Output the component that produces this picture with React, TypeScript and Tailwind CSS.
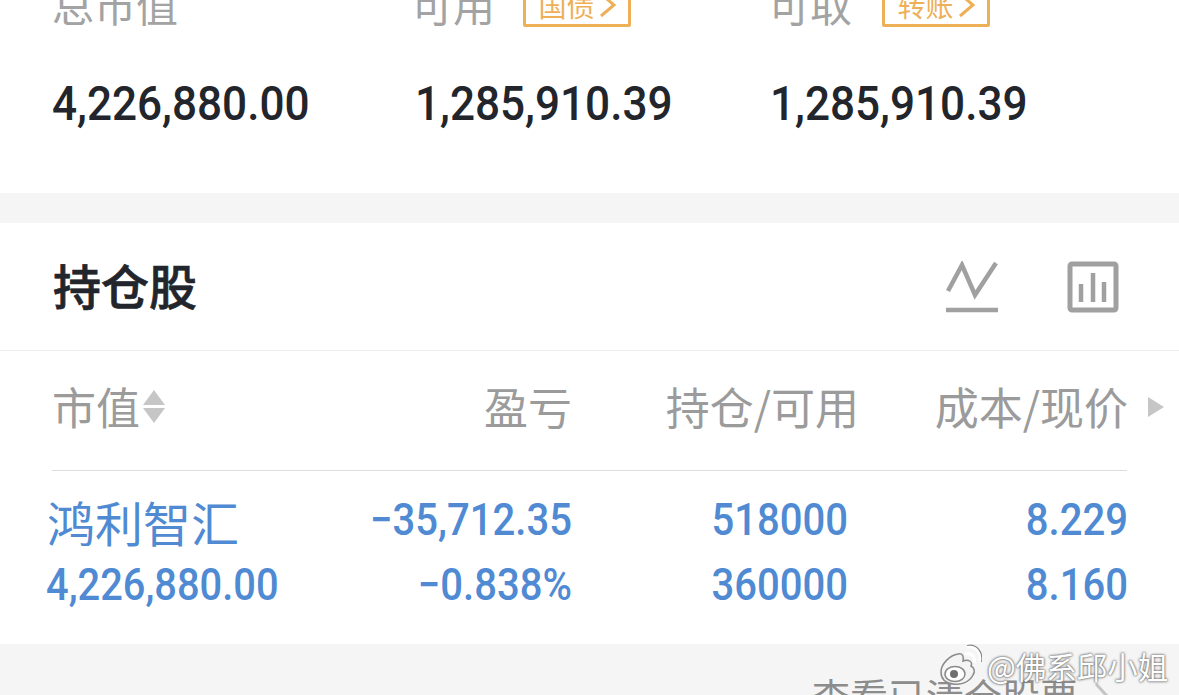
const cjk = "font-['Noto_Sans_CJK_SC',sans-serif]";
const num = "font-['Roboto','Noto_Sans_CJK_SC',sans-serif]";

function Tag({ label, gap }: { label: string; gap: string }) {
  return (
    <span className={`${gap} mt-[8px] flex h-[38px] w-[108px] shrink-0 items-center justify-center rounded-[2px] border-[3px] border-[#eeb057] pb-[6px] text-[28px] leading-none text-[#eeb057] ${cjk}`}>
      {label}
      <svg className="ml-[4px] h-[26px] w-[17px]" viewBox="0 0 17 26" fill="none" stroke="#eeb057" strokeWidth="3">
        <path d="M2 2 L15 13 L2 24" />
      </svg>
    </span>
  );
}

function Summary({ label, value, tag, gap = "", labelClass = "", className }: { label: string; value: string; tag?: string; gap?: string; labelClass?: string; className: string }) {
  return (
    <div className={className}>
      <div className="flex h-[38px] items-center">
        <span className={`${labelClass} text-[42px] leading-none text-[#a3a3a3] ${cjk}`}>{label}</span>
        {tag && <Tag label={tag} gap={gap} />}
      </div>
      <div className={`mt-[56px] origin-left scale-x-[0.9] text-[49px] leading-[50px] font-medium whitespace-nowrap text-[#22252b] ${num}`}>{value}</div>
    </div>
  );
}

function TrendIcon() {
  return (
    <svg className="h-[52px] w-[52px]" viewBox="0 0 52 52" fill="none" stroke="#a0a0a0" strokeWidth="4.5">
      <path d="M2 30 L16 4 L29 34 L50 2" />
      <path d="M0 49 H52" />
    </svg>
  );
}

function BarsIcon() {
  return (
    <svg className="h-[52px] w-[52px]" viewBox="0 0 52 52" fill="none" stroke="#a0a0a0">
      <rect x="3" y="3" width="46" height="46" rx="2" strokeWidth="5" />
      <path d="M14 23 V41 M26 12 V41 M37 21 V41" strokeWidth="4.5" />
    </svg>
  );
}

const grid = "grid grid-cols-[300px_220px_276px_280px]";
const cell = "-ml-[40px] origin-right scale-x-[0.89] text-right whitespace-nowrap";

function WeiboLogo() {
  return (
    <svg className="h-[44px] w-[44px]" viewBox="0 0 44 44" fill="none">
      <path d="M3 28 C3 20 12 11 20 10 C25 9 26 13 25 17 C31 15 35 18 33 22 C37 24 37 28 35 31 C31 39 22 41 15 40 C8 39 3 35 3 28 Z" fill="#f4f4f4" stroke="#8a8a8a" strokeWidth="1.5" />
      <ellipse cx="17" cy="30" rx="10" ry="7.5" fill="#fff" stroke="#8a8a8a" strokeWidth="1.5" />
      <circle cx="16" cy="30" r="4" fill="#6f6f6f" />
      <path d="M27 10 C33 8 38 13 36 19" stroke="#fff" strokeWidth="3" />
      <path d="M29 3 C38 1 44 9 42 17" stroke="#fff" strokeWidth="3" />
      <path d="M29 1.5 C39 -1 45.5 9 43.5 18" stroke="#8a8a8a" strokeWidth="1.2" />
    </svg>
  );
}

export default function App() {
  return (
    <div className="relative h-[695px] w-[1179px] overflow-hidden bg-[#f5f5f5]">
      <div className="flex h-[193px] bg-white pl-[52px]">
        <Summary label="总市值" value="4,226,880.00" className="-mt-[15px] w-[363px]" />
        <Summary label="可用" value="1,285,910.39" tag="国债" gap="ml-[28px]" labelClass="-ml-[4px]" className="-mt-[15px] w-[355px]" />
        <Summary label="可取" value="1,285,910.39" tag="转账" gap="ml-[30px]" labelClass="-ml-[2px]" className="-mt-[15px]" />
      </div>

      <div className="mt-[30px] bg-white">
        <div className="flex h-[128px] items-center justify-between border-b border-[#eeeeee] pr-[60px] pl-[53px]">
          <h2 className={`pb-[5px] text-[48px] leading-none font-medium text-[#22252b] [-webkit-text-stroke:0.7px_#22252b] ${cjk}`}>持仓股</h2>
          <div className="flex items-center gap-[69px]">
            <TrendIcon />
            <BarsIcon />
          </div>
        </div>

        <div className="relative mx-[52px] h-[120px] border-b border-[#dddddd]">
          <div className={`${grid} h-full items-center pb-[10px] text-[44px] leading-none text-[#9b9b9b] ${cjk}`}>
            <div className="flex items-center">
              市值
              <span className="mt-[2px] ml-[3px] flex flex-col gap-[3px]">
                <span className="h-0 w-0 border-x-[11px] border-b-[15px] border-x-transparent border-b-[#c6c6c6]" />
                <span className="h-0 w-0 border-x-[11px] border-t-[15px] border-x-transparent border-t-[#c6c6c6]" />
              </span>
            </div>
            <div className="text-right">盈亏</div>
            <div className="-mr-[11px] text-right whitespace-nowrap">持仓/可用</div>
            <div className="text-right whitespace-nowrap">成本/现价</div>
          </div>
          <span className="absolute top-[46px] left-[1096px] h-0 w-0 border-y-[10px] border-l-[16px] border-y-transparent border-l-[#c6c6c6]" />
        </div>

        <div className={`mx-[52px] h-[173px] pt-[25px] font-medium text-[#4f8ad3] ${num}`}>
          <div className={`${grid} text-[45px] leading-[48px]`}>
            <div className={`-ml-[5px] mt-[1px] text-[48px] font-normal ${cjk}`}>鸿利智汇</div>
            <div className={cell}>−35,712.35</div>
            <div className={cell}>518000</div>
            <div className={cell}>8.229</div>
          </div>
          <div className={`${grid} mt-[16px] text-[45px] leading-[48px]`}>
            <div className="-ml-[6px] origin-left scale-x-[0.885] whitespace-nowrap">4,226,880.00</div>
            <div className={cell}>−0.838%</div>
            <div className={cell}>360000</div>
            <div className={cell}>8.160</div>
          </div>
        </div>
      </div>

      <div className={`flex h-[50px] items-start justify-end pt-[32px] pr-[59px] text-[38px] leading-none text-[#8c8c8c] ${cjk}`}>
        查看已清仓股票
        <svg className="mt-[6px] ml-[16px] h-[30px] w-[26px]" viewBox="0 0 26 30" fill="none" stroke="#c4c4c4" strokeWidth="3">
          <path d="M2 2 L24 26" />
        </svg>
      </div>

      <div className="absolute top-[644px] left-[938px] flex items-center">
        <WeiboLogo />
        <span className={`ml-[5px] text-[30.5px] leading-none text-white [text-shadow:0_0_2px_#555,0_0_3px_#777] ${cjk}`}>@佛系邱小姐</span>
      </div>
    </div>
  );
}
